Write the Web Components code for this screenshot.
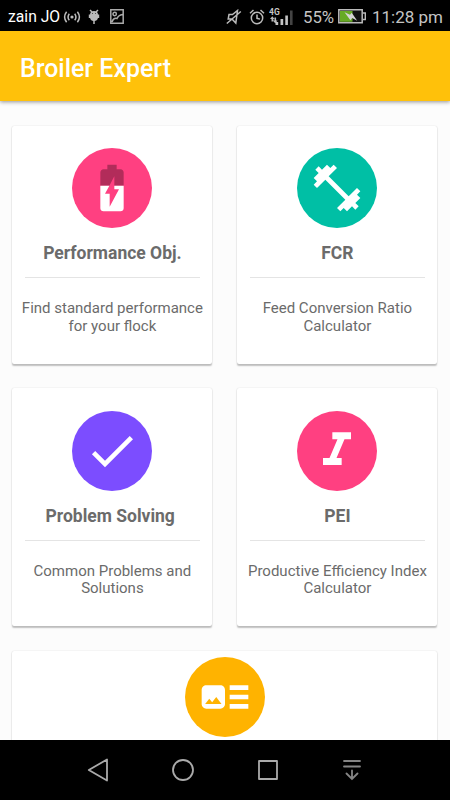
<!DOCTYPE html>
<html lang="en">
<head>
<meta charset="utf-8">
<meta name="viewport" content="width=device-width, initial-scale=1">
<title>Broiler Expert</title>
<style>
html, body {
    margin: 0;
    height: 100%;
    overflow: hidden;
    background: #fcfcfc;
    font-family: Roboto, sans-serif;
}
</style>
</head>
<body>
<broiler-app></broiler-app>

<template id="status-bar">
<style>
:host {
    display: flex;
    justify-content: space-between;
    align-items: center;
    height: 31px;
    box-sizing: border-box;
    padding: 2px 7px 0 8px;
    background: #000;
    color: #fff;
    font-size: 16.8px;
    line-height: 30px;
    white-space: nowrap;
}
.group {
    display: flex;
    align-items: center;
}
svg {
    display: block;
    flex: none;
}
.carrier {
    width: 52px;
    font-size: 15.7px;
}
.muted {
    color: #c4c4c4;
}
.percent {
    width: 33px;
    margin-left: 9px;
}
.time {
    width: 71px;
    margin-left: 6px;
    font-size: 17px;
}
</style>
<div class="group">
    <span class="carrier">zain JO</span>
    <svg width="18" height="16" viewBox="0 0 18 16" fill="none" stroke="#bbb" stroke-width="1.5" style="margin-left:3px">
        <circle cx="9" cy="8" r="1.6" fill="#bbb" stroke="none"/>
        <path d="M6.3 4.7Q3.8 8 6.3 11.3M11.7 4.7Q14.2 8 11.7 11.3M3.6 2.7Q-.4 8 3.6 13.3M14.4 2.7Q18.4 8 14.4 13.3"/>
    </svg>
    <svg width="12" height="16" viewBox="0 0 12 16" style="margin-left:7px">
        <path d="M2 1l2 2M10 1L8 3M6 10v5" stroke="#bbb" stroke-width="1.5" fill="none"/>
        <path d="M2 6a4 4 0 0 1 8 0v2a4 4 0 0 1-8 0zM.8 5.500h1.500V9H.8zM9.700 5.500h1.500V9H9.700z" fill="#bbb"/>
        <path d="M4 4.500h1M7 4.500h1" stroke="#555"/>
    </svg>
    <svg width="14" height="15" viewBox="0 0 14 15" fill="none" stroke="#aaa" stroke-width="1.5" style="margin-left:10px">
        <path d="M.8.8h12.400v13.400H.8zM2 13Q3.500 8.500 7 9.500Q8.500 6 12.500 5.500"/>
        <circle cx="4.7" cy="5" r="1.7"/>
    </svg>
</div>
<div class="group muted">
    <svg width="16" height="16" viewBox="0 0 16 16" fill="none" stroke="#bbb" stroke-width="1.5">
        <path d="M3 5.500h3.500L11.500 1.500L9.800 14L6 10H2.200zM.8 14.500L14.800 2.500"/>
    </svg>
    <svg width="16" height="16" viewBox="0 0 16 16" fill="none" stroke="#bbb" stroke-width="1.5" style="margin-left:7px">
        <circle cx="8" cy="9" r="5.7"/>
        <path d="M8 5.500V9.300l3 .8M1 4.200L4.500 1M15 4.200L11.500 1"/>
    </svg>
    <svg width="25" height="22" viewBox="0 0 25 22" style="margin-left:4px">
        <text x="0" y="8.5" font-family="Roboto, sans-serif" font-weight="700" font-size="8.5" fill="#c4c4c4">4G</text>
        <path d="M1 13l2.300-2.700L5.500 13zM4 14.500h4.500L6.300 17.500zM2.500 12.500h1.800v3H2.500zM5.500 11.500h1.600v3.500H5.500z" fill="#bbb"/>
        <path d="M6.500 16h2.700v3H6.500zM11.500 13h2.700v6h-2.700zM16.300 9.500h2.600V19h-2.600z" fill="#c4c4c4"/>
        <path d="M21 4.500h2.600V19H21z" fill="#444"/>
    </svg>
    <span class="percent">55%</span>
    <svg width="28" height="15" viewBox="0 0 28 15" style="margin-left:2px">
        <path d="M.8.8h23.400v13H.8z" fill="#111" stroke="#bbb" stroke-width="1.5"/>
        <path d="M25 4h2.300v6.500H25" fill="none" stroke="#bbb" stroke-width="1.4"/>
        <path d="M2 2h12.500v10.800H2z" fill="#67aa25"/>
        <path d="M6.500 3.300l5.500 2.400 1.700-2 5.500 8-5-2.700-1.800 2.200z" fill="#d4d4d4"/>
    </svg>
    <span class="time">11:28 pm</span>
</div>
</template>

<template id="app-bar">
<style>
:host {
    display: flex;
    align-items: center;
    height: 70px;
    box-sizing: border-box;
    padding: 5px 20px 0;
    background: #ffc10a;
    box-shadow: 0 1px 4px rgba(0, 0, 0, .42);
    position: relative;
}
h1 {
    margin: 0;
    color: #fff;
    font-size: 24.9px;
    font-weight: 500;
    line-height: 31px;
}
</style>
<h1><slot></slot></h1>
</template>

<template id="menu-card">
<style>
:host {
    display: flex;
    flex-direction: column;
    align-items: center;
    height: 238px;
    box-sizing: border-box;
    padding: 22.5px 0 0;
    background: #fff;
    border-radius: 2px;
    box-shadow: 0 1.3px 1.5px rgba(0, 0, 0, .24), 0 0 1.5px rgba(0, 0, 0, .12);
    color: #6b6b6b;
    text-align: center;
}
:host([wide]) {
    grid-column: 1 / -1;
    padding-top: 6px;
}
.badge {
    display: grid;
    place-items: center;
    flex: none;
    width: 80px;
    height: 80px;
    border-radius: 50%;
    background: var(--badge);
}
::slotted(svg) {
    width: 56px;
    height: 56px;
    fill: #fff;
}
h2 {
    margin: 15px 0 0;
    font-size: 17.5px;
    font-weight: 700;
    line-height: 20px;
    white-space: pre;
}
hr {
    flex: none;
    width: 175px;
    height: 1px;
    margin: 14px 0 0;
    border: 0;
    background: #e4e4e4;
}
p {
    margin: 22px 0 0;
    font-size: 15px;
    line-height: 17.5px;
    white-space: pre-line;
}
:host([wide]) h2, :host([wide]) hr, :host([wide]) p {
    display: none;
}
</style>
<div class="badge"><slot></slot></div>
<h2></h2>
<hr>
<p></p>
</template>

<template id="nav-bar">
<style>
:host {
    display: flex;
    align-items: center;
    gap: 62px;
    height: 60px;
    box-sizing: border-box;
    padding: 0 87px;
    background: #000;
}
svg {
    display: block;
    flex: none;
    fill: none;
    stroke: #aaa;
    stroke-width: 1.8;
}
</style>
<svg width="22" height="24" viewBox="0 0 22 24"><path d="M1.800 12L20 1.500v21z" stroke-linejoin="round"/></svg>
<svg width="24" height="24" viewBox="0 0 24 24"><circle cx="12" cy="12" r="10"/></svg>
<svg width="22" height="24" viewBox="0 0 22 24"><path d="M2 3h18v18H2z" stroke-linejoin="round"/></svg>
<svg width="22" height="24" viewBox="-1 0 22 24" stroke-linecap="round"><path d="M2 3h16M2 8.500h16M10 12.500v8.500M4.500 15.500L10 21l5.500-5.500" style="stroke:#858585"/></svg>
</template>

<template id="broiler-app">
<style>
:host {
    display: flex;
    flex-direction: column;
    height: 100vh;
}
main {
    flex: 1;
    min-height: 0;
    overflow: hidden;
    display: grid;
    grid-template-columns: 1fr 1fr;
    grid-auto-rows: 238px;
    gap: 24.5px 25px;
    align-content: start;
    padding: 24.7px 12.6px 0 12.4px;
}
</style>
<status-bar></status-bar>
<app-bar>Broiler Expert</app-bar>
<main>
    <menu-card heading="Performance Obj." text="Find standard performance&#10;for your flock" style="--badge:#ff4081">
        <svg viewBox="0 0 24 24">
            <path fill="#000" fill-opacity=".3" d="M17 5.330C17 4.600 16.400 4 15.670 4H14V2h-4v2H8.330C7.600 4 7 4.600 7 5.330V11h3.870L13 7v4h4V5.330z"/>
            <path d="M13 12.500h2L11 20v-5.500H9l1.870-3.500H7v9.670C7 21.400 7.600 22 8.330 22h7.330c.74 0 1.340-.6 1.340-1.330V11h-4v1.500z"/>
        </svg>
    </menu-card>
    <menu-card heading="FCR" text="Feed Conversion Ratio&#10;Calculator" style="--badge:#00bfa5">
        <svg viewBox="0 0 24 24"><path d="M20.570 14.860L22 13.430 20.570 12 17 15.570 8.430 7 12 3.430 10.570 2 9.140 3.430 7.710 2 5.570 4.140 4.140 2.710 2.710 4.140l1.430 1.430L2 7.710l1.430 1.430L2 10.570 3.430 12 7 8.430 15.570 17 12 20.570 13.430 22l1.430-1.430L16.290 22l2.140-2.140 1.430 1.430 1.430-1.430-1.430-1.430L22 16.290z"/></svg>
    </menu-card>
    <menu-card heading="Problem Solving " text="Common Problems and&#10;Solutions" style="--badge:#7c4dff">
        <svg viewBox="0 0 24 24"><path d="M9 16.200L4.800 12l-1.400 1.400L9 19 21 7l-1.400-1.400L9 16.200z"/></svg>
    </menu-card>
    <menu-card heading="PEI" text="Productive Efficiency Index&#10;Calculator" style="--badge:#ff4081">
        <svg viewBox="0 0 24 24"><path d="M10 4v3h2.210l-3.420 8H6v3h8v-3h-2.210l3.420-8H18V4z"/></svg>
    </menu-card>
    <menu-card wide style="--badge:#ffb300">
        <svg viewBox="0 0 24 24"><path d="M22 13h-8v-2h8v2zm0-6h-8v2h8V7zm-8 10h8v-2h-8v2zm-2-8v6c0 1.100-.9 2-2 2H4c-1.100 0-2-.9-2-2V9c0-1.100.9-2 2-2h6c1.100 0 2 .9 2 2zm-1.500 6l-2.250-3-1.750 2.260-1.250-1.510L3.500 15h7z"/></svg>
    </menu-card>
</main>
<nav-bar></nav-bar>
</template>

<script>
class TemplateElement extends HTMLElement {
    constructor() {
        super();
        this.attachShadow({ mode: 'open' });
        const template = document.getElementById(this.localName);
        this.shadowRoot.appendChild(template.content.cloneNode(true));
    }
}

class StatusBar extends TemplateElement {}
class AppBar extends TemplateElement {}
class NavBar extends TemplateElement {}

class MenuCard extends HTMLElement {
    connectedCallback() {
        if (this.shadowRoot) return;
        this.attachShadow({ mode: 'open' });
        const template = document.getElementById('menu-card');
        this.shadowRoot.appendChild(template.content.cloneNode(true));
        this.shadowRoot.querySelector('h2').textContent = this.getAttribute('heading') || '';
        this.shadowRoot.querySelector('p').textContent = this.getAttribute('text') || '';
    }
}

class BroilerApp extends TemplateElement {}

customElements.define('status-bar', StatusBar);
customElements.define('app-bar', AppBar);
customElements.define('menu-card', MenuCard);
customElements.define('nav-bar', NavBar);
customElements.define('broiler-app', BroilerApp);
</script>
</body>
</html>
